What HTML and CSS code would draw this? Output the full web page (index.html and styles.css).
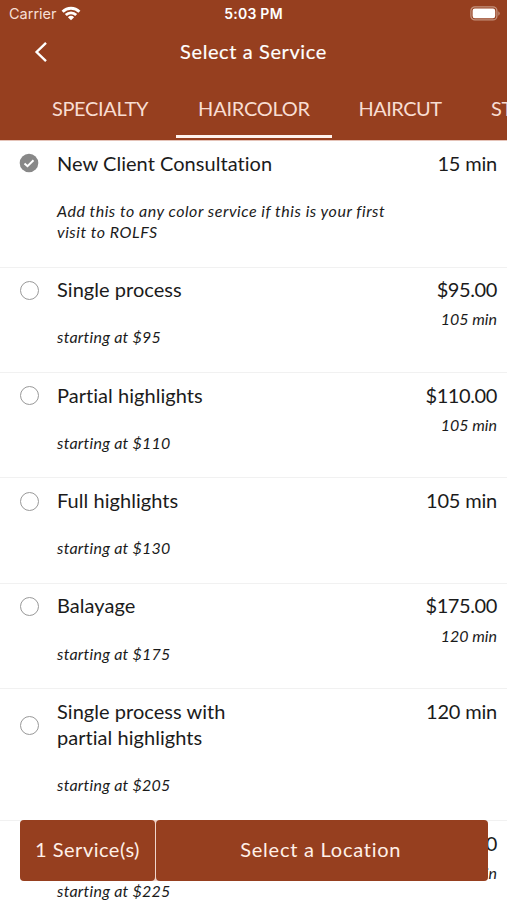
FILE: index.html
```html
<!DOCTYPE html>
<html lang="en">
<head>
<meta charset="utf-8">
<title>Select a Service</title>
<link rel="stylesheet" href="styles.css">
</head>
<body>
<header class="header">
  <div class="status">
    <div class="carrier"><span>Carrier</span>
      <svg class="wifi" width="20" height="15" viewBox="0 0 20 15" fill="none" stroke="#fff" stroke-width="2.9"><path d="M1.6 5.7a12 12 0 0 1 16.8 0M4.8 9a7.5 7.5 0 0 1 10.4 0"/><path d="M10 14.2 6.9 11.2a4.5 4.5 0 0 1 6.2 0z" fill="#fff" stroke="none"/></svg>
    </div>
    <span class="clock">5:03 PM</span>
    <svg class="battery" width="30" height="15" viewBox="0 0 30 15"><rect x=".9" y=".9" width="26" height="13" rx="4" fill="none" stroke="#c4927d" stroke-width="1.3"/><rect x="2.6" y="2.6" width="22.6" height="9.6" rx="2.2" fill="#fff"/><path d="M28.3 5.2v4.6q1.4-.8 1.4-2.3t-1.4-2.3z" fill="#c4927d"/></svg>
  </div>
  <div class="titlebar">
    <svg class="back" width="14" height="22" viewBox="0 0 14 22" fill="none" stroke="#fff" stroke-width="2.4"><path d="M12 1.8 2.6 11 12 20.2"/></svg>
    <h1 class="page-title">Select a Service</h1>
  </div>
  <nav class="tabs">
    <a class="tab specialty">SPECIALTY</a>
    <a class="tab active">HAIRCOLOR</a>
    <a class="tab haircut">HAIRCUT</a>
    <a class="tab styling">STYLING</a>
  </nav>
</header>
<main class="list">
  <section class="row">
    <svg class="radio" width="20" height="20" viewBox="0 0 20 20"><circle cx="10" cy="10" r="9.3" fill="#888"/><path d="m5.5 10.4 3 2.8 6-6" fill="none" stroke="#fff" stroke-width="2"/></svg>
    <h2 class="name">New Client Consultation</h2>
    <div class="cost"><span class="price">15 min</span></div>
    <p class="note long">Add this to any color service if this is your first<br>visit to ROLFS</p>
  </section>
  <section class="row">
    <span class="radio open"></span>
    <h2 class="name">Single process</h2>
    <div class="cost"><span class="price money">$95.00</span><span class="time">105 min</span></div>
    <p class="note">starting at $95</p>
  </section>
  <section class="row">
    <span class="radio open"></span>
    <h2 class="name">Partial highlights</h2>
    <div class="cost"><span class="price money">$110.00</span><span class="time">105 min</span></div>
    <p class="note">starting at $110</p>
  </section>
  <section class="row">
    <span class="radio open"></span>
    <h2 class="name">Full highlights</h2>
    <div class="cost"><span class="price">105 min</span></div>
    <p class="note">starting at $130</p>
  </section>
  <section class="row">
    <span class="radio open"></span>
    <h2 class="name">Balayage</h2>
    <div class="cost"><span class="price money">$175.00</span><span class="time">120 min</span></div>
    <p class="note">starting at $175</p>
  </section>
  <section class="row">
    <span class="radio open"></span>
    <h2 class="name">Single process with<br>partial highlights</h2>
    <div class="cost"><span class="price">120 min</span></div>
    <p class="note">starting at $205</p>
  </section>
  <section class="row">
    <span class="radio open"></span>
    <div class="name"></div>
    <div class="cost"><span class="price money">0</span><span class="time">in</span></div>
    <p class="note">starting at $225</p>
  </section>
</main>
<footer class="actions">
  <button class="btn count">1 Service(s)</button>
  <button class="btn next">Select a Location</button>
</footer>
</body>
</html>
```
FILE: styles.css
```css
* { box-sizing: border-box; }
body {
  margin: 0;
  height: 900px;
  position: relative;
  overflow: hidden;
  background: #fff;
  color: #1b1b1b;
  font-family: Lato, sans-serif;
}
.header { height: 141px; background: #963f1f; color: #fff; border-bottom: 1px solid #e5c3b8; }
.status {
  height: 28px;
  padding: 0 7px 0 9px;
  display: grid;
  grid-template-columns: 1fr auto 1fr;
  align-items: center;
  font-family: Inter, sans-serif;
  font-size: 14.5px;
}
.carrier { display: flex; align-items: center; gap: 5px; color: #f6dfd5; margin-top: -2px; }
.wifi { margin-left: -1px; }
.clock { font-weight: 600; font-size: 14px; letter-spacing: .25px; margin: -1px 2px 0 0; }
.battery { justify-self: end; margin-top: -1px; }
.titlebar { height: 46px; display: grid; grid-template-columns: 34px 1fr 34px; align-items: center; }
.back { margin: 2px 0 0 34px; }
.page-title { margin: 0; text-align: center; font-size: 20px; font-weight: 400; letter-spacing: .6px; -webkit-text-stroke: .15px #fff; }
.tabs { height: 66px; display: flex; overflow: hidden; color: #f8ddd2; font-size: 20px; line-height: 69px; white-space: nowrap; }
.tab { flex: none; text-align: center; height: 64px; letter-spacing: -.25px; }
.specialty { width: 126px; margin-left: 37px; margin-right: 13px; letter-spacing: -.35px; }
.active { width: 156px; border-bottom: 3px solid #fff3ee; }
.haircut { width: 136px; letter-spacing: -.5px; }
.styling { margin-left: 23px; }
.row {
  display: grid;
  grid-template-columns: 57px 1fr auto;
  align-items: center;
  padding: 8.7px 10px 24.3px 0;
  border-bottom: 1px solid #f1f1f1;
}
.radio { justify-self: start; margin: 1px 0 0 19px; width: 20px; height: 20px; }
.open { margin: 2px 0 0 19.5px; width: 19px; height: 19px; border: 1.5px solid #999; border-radius: 50%; background: #fff; }
.name { margin: 0; min-height: 26.4px; font-size: 20px; font-weight: 400; line-height: 26.4px; letter-spacing: .04px; }
.cost { align-self: start; height: 26.4px; display: flex; flex-direction: column; align-items: flex-end; }
.price { font-size: 20px; line-height: 26.4px; letter-spacing: -.2px; }
.money { letter-spacing: -.4px; }
.time { font-size: 16px; font-style: italic; line-height: 21.2px; margin-top: 5.7px; }
.note { grid-column: 2 / 4; margin: 23.8px 0 0; font-size: 16px; font-style: italic; line-height: 21.2px; letter-spacing: .25px; }
.long { letter-spacing: .51px; }
.actions { position: absolute; left: 20px; top: 820px; width: 467.5px; height: 61px; display: flex; gap: 1px; background: #f0d5cb; border-radius: 4px; }
.btn { border: 0; border-radius: 4px; padding: 0 0 4px; background: #963f1f; color: #fff0e8; font-family: Lato, sans-serif; font-size: 20px; letter-spacing: .5px; }
.count { width: 135px; }
.next { flex: 1; letter-spacing: .75px; padding-right: 2px; }
```
